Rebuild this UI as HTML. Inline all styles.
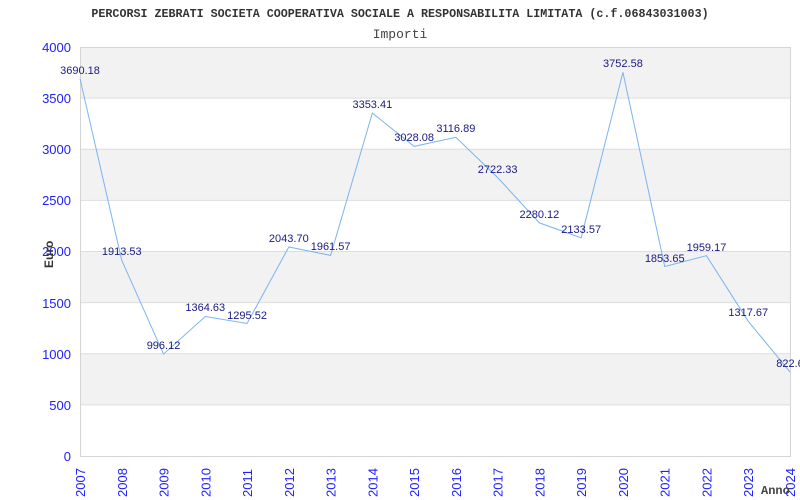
<!DOCTYPE html>
<html><head><meta charset="utf-8"><style>
body{margin:0;background:#fff;width:800px;height:500px;overflow:hidden}
svg{display:block}
.yl{font:13px "Liberation Sans",sans-serif;fill:#2020ff;text-anchor:end}
.xl{font:13px "Liberation Sans",sans-serif;fill:#2020ff;text-anchor:start}
.v{font:11px "Liberation Sans",sans-serif;fill:#1a1a80;text-anchor:middle}
</style></head><body>
<svg width="800" height="500" viewBox="0 0 800 500">
<text x="400" y="17" text-anchor="middle" style="font:bold 11.7px 'Liberation Mono',monospace;fill:#333">PERCORSI ZEBRATI SOCIETA COOPERATIVA SOCIALE A RESPONSABILITA LIMITATA (c.f.06843031003)</text>
<text x="400" y="38" text-anchor="middle" style="font:13px 'Liberation Mono',monospace;fill:#444">Importi</text>
<rect x="80" y="47" width="710.5" height="51.1" fill="#f2f2f2"/>
<rect x="80" y="149.25" width="710.5" height="51.1" fill="#f2f2f2"/>
<rect x="80" y="251.5" width="710.5" height="51.1" fill="#f2f2f2"/>
<rect x="80" y="353.75" width="710.5" height="51.1" fill="#f2f2f2"/>
<g stroke="#ddd" stroke-width="1">
<line x1="80" y1="98.1" x2="790.5" y2="98.1"/><line x1="80" y1="149.25" x2="790.5" y2="149.25"/>
<line x1="80" y1="200.4" x2="790.5" y2="200.4"/><line x1="80" y1="251.5" x2="790.5" y2="251.5"/>
<line x1="80" y1="302.6" x2="790.5" y2="302.6"/><line x1="80" y1="353.75" x2="790.5" y2="353.75"/>
<line x1="80" y1="404.9" x2="790.5" y2="404.9"/>
</g>
<rect x="80.5" y="47.5" width="710" height="409" fill="none" stroke="#d4d4d4"/>
<g class="yl">
<text x="71" y="52">4000</text><text x="71" y="103">3500</text><text x="71" y="154">3000</text><text x="71" y="205">2500</text><text x="71" y="256">2000</text><text x="71" y="308">1500</text><text x="71" y="359">1000</text><text x="71" y="410">500</text><text x="71" y="461">0</text>
</g>
<polyline fill="none" stroke="#7ab4f0" stroke-width="1" points="80,78.7 121.76,260.3 163.53,354.1 205.29,316.5 247.06,323.5 288.82,247 330.59,255.4 372.35,113.1 414.12,146.4 455.88,137.3 497.65,177.6 539.41,222.9 581.18,237.8 622.94,72.3 664.71,266.5 706.47,255.7 748.24,321.3 790,371.9"/>
<g class="v">
<text x="80" y="74">3690.18</text><text x="121.76" y="255">1913.53</text><text x="163.53" y="349">996.12</text><text x="205.29" y="311">1364.63</text><text x="247.06" y="319">1295.52</text><text x="288.82" y="242">2043.70</text><text x="330.59" y="250">1961.57</text><text x="372.35" y="108">3353.41</text><text x="414.12" y="141">3028.08</text><text x="455.88" y="132">3116.89</text><text x="497.65" y="173">2722.33</text><text x="539.41" y="218">2280.12</text><text x="581.18" y="233">2133.57</text><text x="622.94" y="67">3752.58</text><text x="664.71" y="262">1853.65</text><text x="706.47" y="251">1959.17</text><text x="748.24" y="316">1317.67</text><text x="790" y="367">822.6</text>
</g>
<g class="xl">
<text transform="translate(85,497) rotate(-90)">2007</text>
<text transform="translate(126.76,497) rotate(-90)">2008</text>
<text transform="translate(168.53,497) rotate(-90)">2009</text>
<text transform="translate(210.29,497) rotate(-90)">2010</text>
<text transform="translate(252.06,497) rotate(-90)">2011</text>
<text transform="translate(293.82,497) rotate(-90)">2012</text>
<text transform="translate(335.59,497) rotate(-90)">2013</text>
<text transform="translate(377.35,497) rotate(-90)">2014</text>
<text transform="translate(419.12,497) rotate(-90)">2015</text>
<text transform="translate(460.88,497) rotate(-90)">2016</text>
<text transform="translate(502.65,497) rotate(-90)">2017</text>
<text transform="translate(544.41,497) rotate(-90)">2018</text>
<text transform="translate(586.18,497) rotate(-90)">2019</text>
<text transform="translate(627.94,497) rotate(-90)">2020</text>
<text transform="translate(669.71,497) rotate(-90)">2021</text>
<text transform="translate(711.47,497) rotate(-90)">2022</text>
<text transform="translate(753.24,497) rotate(-90)">2023</text>
<text transform="translate(795,497) rotate(-90)">2024</text>
</g>
<text transform="translate(53,268) rotate(-90)" style="font:bold 12px 'Liberation Sans',sans-serif;fill:#333">Euro</text>
<text x="761" y="494" style="font:bold 12px 'Liberation Mono',monospace;fill:#444">Anno</text>
</svg>
</body></html>
